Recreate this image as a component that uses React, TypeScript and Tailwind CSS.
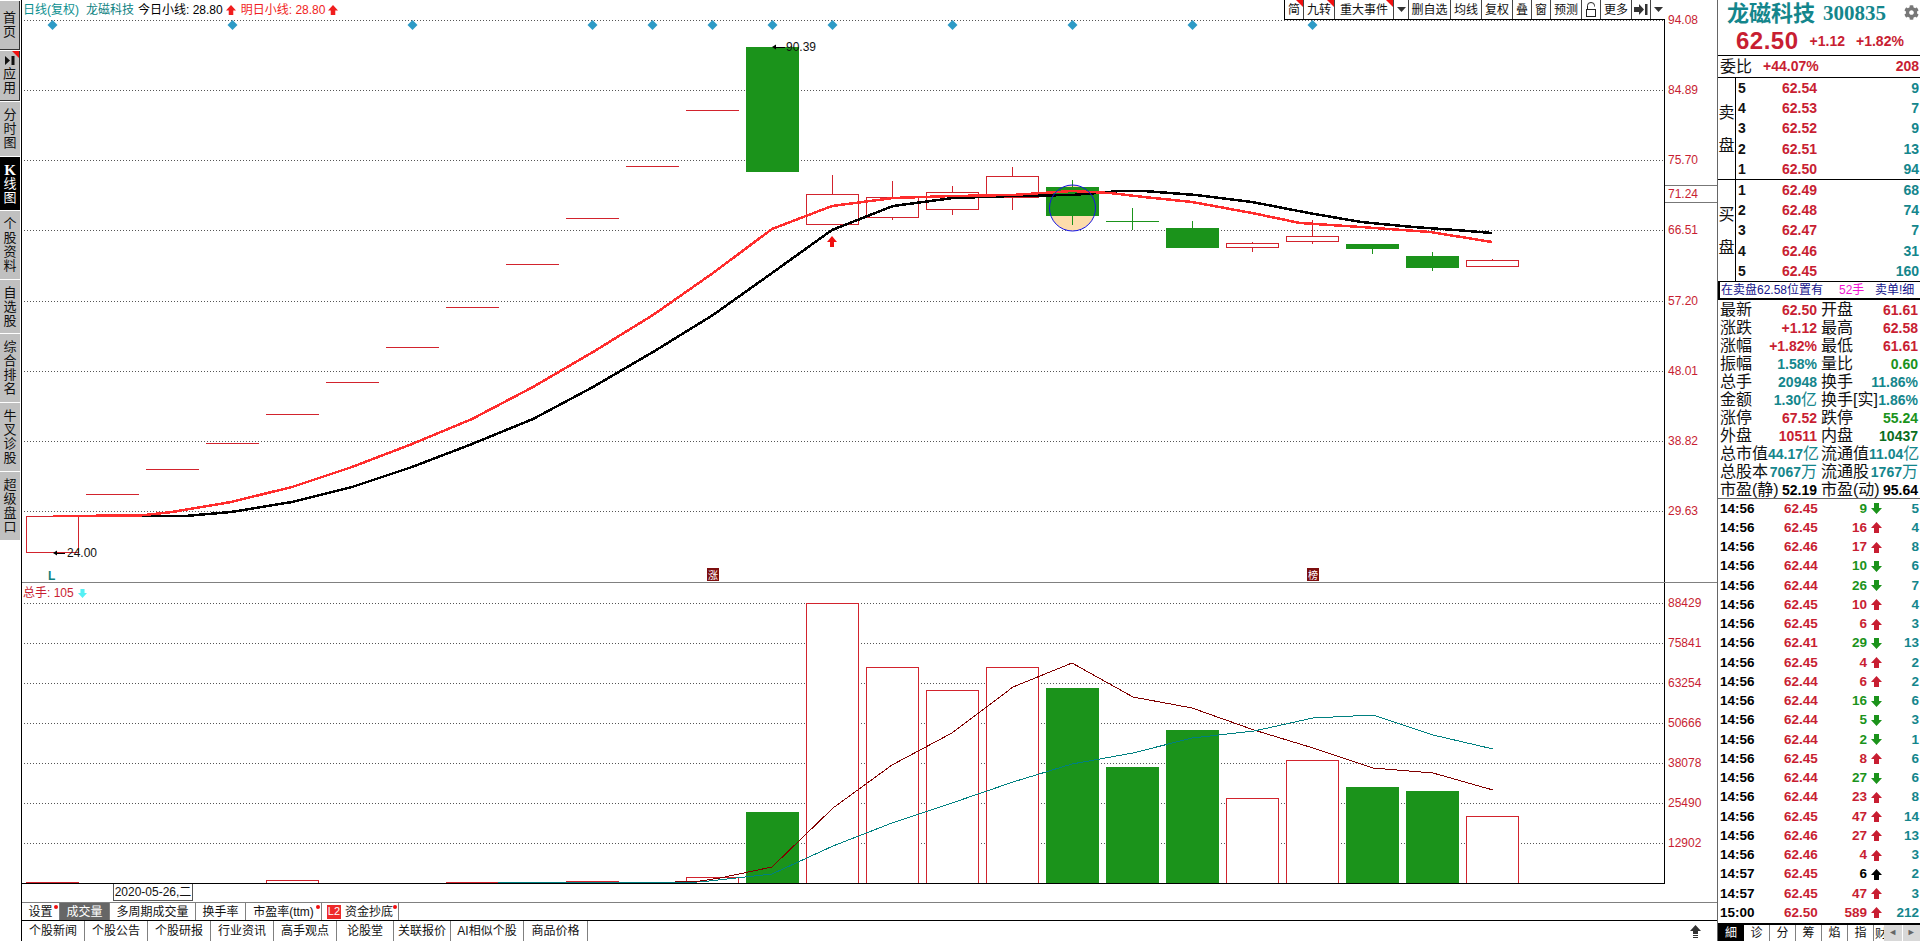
import React from 'react';
import { FaCog } from 'react-icons/fa';

const RED = '#c81e32';
const TEAL = '#14868c';
const GREEN = '#1b931b';

// chart geometry, all in page pixels
const AXIS_X = 1664.5;
const candleLeft = (k: number) => 26 + 60 * k;
const candleMid = (k: number) => 52.5 + 60 * k;

interface Candle {
  k: number;
  top: number;
  bottom: number;
  hi?: number;
  lo?: number;
  up: boolean;
}

const CANDLES: Candle[] = [
  { k: 0, top: 516, bottom: 552, up: true },
  { k: 12, top: 47, bottom: 172, up: false },
  { k: 13, top: 194, bottom: 224, hi: 175, up: true },
  { k: 14, top: 197, bottom: 217, hi: 181, lo: 220, up: true },
  { k: 15, top: 192, bottom: 209, hi: 186, lo: 215, up: true },
  { k: 16, top: 176, bottom: 197, hi: 167, lo: 210, up: true },
  { k: 19, top: 228, bottom: 248, hi: 221, up: false },
  { k: 20, top: 243, bottom: 247, hi: 242, lo: 252, up: true },
  { k: 21, top: 236, bottom: 241, hi: 220, lo: 244, up: true },
  { k: 22, top: 244, bottom: 249, lo: 254, up: false },
  { k: 23, top: 256, bottom: 268, hi: 252, lo: 271, up: false },
  { k: 24, top: 260, bottom: 266, hi: 259, up: true },
];

// one-price limit-up days
const FLAT_DAYS = [
  [1, 494], [2, 469], [3, 443], [4, 414], [5, 382], [6, 347],
  [7, 307], [8, 264], [9, 218], [10, 166], [11, 110],
];

const KLINE_RED = '53,516 140,515.5 172,512 231,502 292,487 352,467 412,444 472,419 533,387 593,352 653,315 713,273 772,229 832,206 893,198 953,196 1012,195 1072,191 1110,193 1144,197 1192,202 1252,213 1300,223 1361,227 1430,232 1492,242';
const KLINE_BLACK = '125,516 185,516 231,512 292,502 352,487 412,467 472,444 533,419 593,387 653,352 713,315 772,273 832,230 893,206 953,198 1012,196 1072,195 1097,193 1120,191 1144,191 1196,195 1252,202 1309,213 1361,222 1413,227 1456,230 1492,233';

const K_GRID = [
  [20, '94.08'], [90, '84.89'], [160, '75.70'], [230, '66.51'],
  [301, '57.20'], [371, '48.01'], [441, '38.82'], [511, '29.63'],
] as const;

const VOL_GRID = [
  [603, '88429'], [643, '75841'], [683, '63254'], [723, '50666'],
  [763, '38078'], [803, '25490'], [843, '12902'],
] as const;

const DIAMONDS = [0, 3, 6, 9, 10, 11, 12, 13, 15, 17, 19, 21];

const VOLUMES: { k: number; top: number; up: boolean }[] = [
  { k: 0, top: 882, up: true }, { k: 1, top: 883, up: true }, { k: 2, top: 883, up: true },
  { k: 3, top: 883, up: true }, { k: 4, top: 880, up: true }, { k: 5, top: 883, up: true },
  { k: 6, top: 883, up: true }, { k: 7, top: 882, up: true }, { k: 8, top: 882, up: true },
  { k: 9, top: 881, up: true }, { k: 10, top: 883, up: true }, { k: 11, top: 877, up: true },
  { k: 12, top: 812, up: false }, { k: 13, top: 603, up: true }, { k: 14, top: 667, up: true },
  { k: 15, top: 690, up: true }, { k: 16, top: 667, up: true }, { k: 17, top: 688, up: false },
  { k: 18, top: 767, up: false }, { k: 19, top: 730, up: false }, { k: 20, top: 798, up: true },
  { k: 21, top: 760, up: true }, { k: 22, top: 787, up: false }, { k: 23, top: 791, up: false },
  { k: 24, top: 816, up: true },
];

const VOL_MA_RED = '400,883 650,883 700,881 720,878 772,867 833,808 892,765 952,733 1013,687 1072,663 1133,697 1192,708 1254,730 1313,748 1373,768 1433,773 1493,790';
const VOL_MA_TEAL = '400,883.5 700,882 772,874 833,846 892,823 952,803 1013,782 1072,764 1133,753 1192,738 1254,731 1313,718 1373,715 1433,735 1493,749';

// left nav strip
const NAV = [
  { chars: ['首', '页'], h: 'h-[49px]', dark: true },
  { chars: ['应', '用'], h: 'h-[50px]', dark: true, flag: true },
  { chars: ['分', '时', '图'], h: 'h-[54px]' },
  { chars: ['线', '图'], h: 'h-[53px]', active: true },
  { chars: ['个', '股', '资', '料'], h: 'h-[68px]' },
  { chars: ['自', '选', '股'], h: 'h-[53px]' },
  { chars: ['综', '合', '排', '名'], h: 'h-[68px]' },
  { chars: ['牛', '叉', '诊', '股'], h: 'h-[68px]' },
  { chars: ['超', '级', '盘', '口'], h: 'h-[68px]' },
];

const TOOLBAR = [
  { label: '简', w: 'w-[19px]', flag: true },
  { label: '九转', w: 'w-[31px]', flag: true },
  { label: '重大事件', w: 'w-[59px]', flag: true },
  { label: 'caret', w: 'w-[15px]' },
  { label: '删自选', w: 'w-[42px]' },
  { label: '均线', w: 'w-[31px]' },
  { label: '复权', w: 'w-[31px]' },
  { label: '叠', w: 'w-[19px]' },
  { label: '窗', w: 'w-[19px]' },
  { label: '预测', w: 'w-[31px]' },
  { label: 'lock', w: 'w-[19px]' },
  { label: '更多', w: 'w-[31px]' },
  { label: 'end', w: 'w-[19px]' },
  { label: 'caret', w: 'w-[14px]' },
];

const SELL = [
  ['5', '62.54', '9'], ['4', '62.53', '7'], ['3', '62.52', '9'], ['2', '62.51', '13'], ['1', '62.50', '94'],
];
const BUY = [
  ['1', '62.49', '68'], ['2', '62.48', '74'], ['3', '62.47', '7'], ['4', '62.46', '31'], ['5', '62.45', '160'],
];

const DARK_GREEN = '#0a6e1e';
const BLACK = '#000';

type Val = { v: string; c: string; unit?: string };
const STATS: [string, Val, string, Val][] = [
  ['最新', { v: '62.50', c: RED }, '开盘', { v: '61.61', c: RED }],
  ['涨跌', { v: '+1.12', c: RED }, '最高', { v: '62.58', c: RED }],
  ['涨幅', { v: '+1.82%', c: RED }, '最低', { v: '61.61', c: RED }],
  ['振幅', { v: '1.58%', c: TEAL }, '量比', { v: '0.60', c: GREEN }],
  ['总手', { v: '20948', c: TEAL }, '换手', { v: '11.86%', c: TEAL }],
  ['金额', { v: '1.30', c: TEAL, unit: '亿' }, '换手[实]', { v: '1.86%', c: TEAL }],
  ['涨停', { v: '67.52', c: RED }, '跌停', { v: '55.24', c: GREEN }],
  ['外盘', { v: '10511', c: RED }, '内盘', { v: '10437', c: DARK_GREEN }],
  ['总市值', { v: '44.17', c: TEAL, unit: '亿' }, '流通值', { v: '11.04', c: TEAL, unit: '亿' }],
  ['总股本', { v: '7067', c: TEAL, unit: '万' }, '流通股', { v: '1767', c: TEAL, unit: '万' }],
  ['市盈(静)', { v: '52.19', c: BLACK }, '市盈(动)', { v: '95.64', c: BLACK }],
];

// time, price, volume, direction, count
const TICKS: [string, string, string, 'up' | 'down' | 'flat', string][] = [
  ['14:56', '62.45', '9', 'down', '5'],
  ['14:56', '62.45', '16', 'up', '4'],
  ['14:56', '62.46', '17', 'up', '8'],
  ['14:56', '62.44', '10', 'down', '6'],
  ['14:56', '62.44', '26', 'down', '7'],
  ['14:56', '62.45', '10', 'up', '4'],
  ['14:56', '62.45', '6', 'up', '3'],
  ['14:56', '62.41', '29', 'down', '13'],
  ['14:56', '62.45', '4', 'up', '2'],
  ['14:56', '62.44', '6', 'up', '2'],
  ['14:56', '62.44', '16', 'down', '6'],
  ['14:56', '62.44', '5', 'down', '3'],
  ['14:56', '62.44', '2', 'down', '1'],
  ['14:56', '62.45', '8', 'up', '6'],
  ['14:56', '62.44', '27', 'down', '6'],
  ['14:56', '62.44', '23', 'up', '8'],
  ['14:56', '62.45', '47', 'up', '14'],
  ['14:56', '62.46', '27', 'up', '13'],
  ['14:56', '62.46', '4', 'up', '3'],
  ['14:57', '62.45', '6', 'flat', '2'],
  ['14:57', '62.45', '47', 'up', '3'],
  ['15:00', '62.50', '589', 'up', '212'],
];

const SUB_TABS = [
  { label: '设置', w: 'w-[38px]', dot: true },
  { label: '成交量', w: 'w-[50px]', active: true },
  { label: '多周期成交量', w: 'w-[86px]' },
  { label: '换手率', w: 'w-[50px]' },
  { label: '市盈率(ttm)', w: 'w-[76px]', dot: true },
  { label: '资金抄底', w: 'w-[77px]', dot: true, l2: true },
];

const NEWS_TABS = [
  { label: '个股新闻', w: 'w-[63px]' },
  { label: '个股公告', w: 'w-[63px]' },
  { label: '个股研报', w: 'w-[63px]' },
  { label: '行业资讯', w: 'w-[63px]' },
  { label: '高手观点', w: 'w-[63px]' },
  { label: '论股堂', w: 'w-[57px]' },
  { label: '关联报价', w: 'w-[57px]' },
  { label: 'AI相似个股', w: 'w-[73px]' },
  { label: '商品价格', w: 'w-[64px]' },
];

const BlockArrow: React.FC<{ dir: 'up' | 'down'; color: string; size?: number }> = ({ dir, color, size = 11 }) => (
  <svg width={size} height={size} viewBox="0 0 11 11" className="block shrink-0">
    <polygon
      points={dir === 'up' ? '5.5,0 11,6 8,6 8,11 3,11 3,6 0,6' : '5.5,11 11,5 8,5 8,0 3,0 3,5 0,5'}
      fill={color}
    />
  </svg>
);

const Caret = () => (
  <svg width="9" height="5" viewBox="0 0 9 5" className="block">
    <polygon points="0,0 9,0 4.5,5" fill="#333" />
  </svg>
);

const CornerFlag = () => (
  <span className="absolute top-0 right-0 w-[7px] h-[7px] bg-[#f01010] [clip-path:polygon(0_0,100%_0,100%_100%)]" />
);

const Sidebar = () => (
  <div className="w-[21px] shrink-0 flex flex-col gap-px pt-px items-start">
    {NAV.map((item, i) => (
      <div
        key={i}
        className={`relative w-[20px] ${item.h} flex flex-col items-center justify-center text-[13px] leading-[14px] ${
          item.active ? 'bg-black text-white' : 'bg-[#c0c0c0] text-[#111]'
        } ${item.dark ? 'border-r border-b border-[#333]' : ''}`}
      >
        {item.flag && <CornerFlag />}
        {item.flag && (
          <svg width="10" height="9" viewBox="0 0 10 9" className="block mb-[2px]">
            <polygon points="0,0 5,4.5 0,9" fill="#111" />
            <rect x="6.5" y="0" width="3" height="9" fill="#111" />
          </svg>
        )}
        {item.active && <span className="font-bold font-['Liberation_Serif',serif] text-[15px]">K</span>}
        {item.chars.map((c) => (
          <span key={c}>{c}</span>
        ))}
      </div>
    ))}
  </div>
);

const Toolbar = () => (
  <div className="absolute top-0 right-[52px] flex h-[20px] bg-white border-b border-black border-l text-[12px] text-[#111]">
    {TOOLBAR.map((t, i) => (
      <div
        key={i}
        className={`relative ${t.w} flex items-center justify-center border-r border-[#444] whitespace-nowrap last:border-r-0`}
      >
        {t.flag && <CornerFlag />}
        {t.label === 'caret' && <Caret />}
        {t.label === 'lock' && (
          <svg width="12" height="15" viewBox="0 0 12 15" className="block">
            <rect x="1.5" y="7.5" width="9" height="7" fill="none" stroke="#222" />
            <path d="M2.5 7 V3.5 Q2.5 .5 6 .5 Q9.5 .5 9.5 3.5 V4.5" fill="none" stroke="#222" />
          </svg>
        )}
        {t.label === 'end' && (
          <svg width="14" height="11" viewBox="0 0 14 11" className="block">
            <polygon points="0,3 5,3 5,0 10,5.5 5,11 5,8 0,8" fill="#333" />
            <rect x="11" y="0" width="2.5" height="11" fill="#333" />
          </svg>
        )}
        {!['caret', 'lock', 'end'].includes(t.label) && t.label}
      </div>
    ))}
  </div>
);

const KLinePanel = () => (
  <div className="relative h-[582px] shrink-0">
    <svg viewBox="22 0 1695 582" className="block w-full h-full">
      {K_GRID.map(([y, label]) => (
        <g key={y}>
          <line x1="24" x2={AXIS_X} y1={y + 0.5} y2={y + 0.5} stroke="#555" strokeDasharray="1 2" shapeRendering="crispEdges" />
          <text x="1668" y={y + 4} fontSize="12" fill={RED}>{label}</text>
        </g>
      ))}
      <line x1={AXIS_X} x2={AXIS_X} y1="0" y2="582" stroke="#000" shapeRendering="crispEdges" />

      {/* current price box on the axis */}
      <line x1={AXIS_X} x2="1717" y1="185.5" y2="185.5" stroke="#777" shapeRendering="crispEdges" />
      <line x1={AXIS_X} x2="1717" y1="202.5" y2="202.5" stroke="#777" shapeRendering="crispEdges" />
      <text x="1668" y="198" fontSize="12" fill={RED}>71.24</text>

      {DIAMONDS.map((k) => {
        const x = candleMid(k);
        return <polygon key={k} points={`${x},20 ${x + 5},25 ${x},30 ${x - 5},25`} fill="#2e9bc6" />;
      })}

      {FLAT_DAYS.map(([k, y]) => (
        <line key={k} x1={candleLeft(k)} x2={candleLeft(k) + 53} y1={y + 0.5} y2={y + 0.5} stroke="#d2232d" shapeRendering="crispEdges" />
      ))}

      {/* highlighted day: the disc sits behind the candle body */}
      <circle cx="1072.5" cy="208" r="23" fill="#fddcab" />
      <line x1="1072.5" x2="1072.5" y1="180" y2="225" stroke={GREEN} shapeRendering="crispEdges" />
      <rect x="1046" y="187" width="53" height="29" fill={GREEN} shapeRendering="crispEdges" />
      <line x1="1072.5" x2="1072.5" y1="216" y2="225" stroke={GREEN} shapeRendering="crispEdges" />

      {/* doji */}
      <line x1="1106" x2="1159" y1="221.5" y2="221.5" stroke={GREEN} shapeRendering="crispEdges" />
      <line x1="1132.5" x2="1132.5" y1="208" y2="230" stroke={GREEN} shapeRendering="crispEdges" />

      {CANDLES.map((c) => {
        const x = candleLeft(c.k);
        const mid = candleMid(c.k);
        const color = c.up ? '#d2232d' : GREEN;
        return (
          <g key={c.k} shapeRendering="crispEdges">
            {c.hi !== undefined && <line x1={mid} x2={mid} y1={c.hi} y2={c.top} stroke={color} />}
            {c.lo !== undefined && <line x1={mid} x2={mid} y1={c.bottom} y2={c.lo} stroke={color} />}
            {c.up ? (
              <rect x={x + 0.5} y={c.top + 0.5} width="52" height={c.bottom - c.top} fill="none" stroke={color} />
            ) : (
              <rect x={x} y={c.top} width="53" height={c.bottom - c.top} fill={color} />
            )}
          </g>
        );
      })}

      <polyline points={KLINE_BLACK} fill="none" stroke="#000" strokeWidth="2.5" shapeRendering="crispEdges" />
      <polyline points={KLINE_RED} fill="none" stroke="#ff2d2d" strokeWidth="2.5" shapeRendering="crispEdges" />
      <circle cx="1072.5" cy="208" r="23" fill="none" stroke="#1414e6" />

      {/* buy arrow under the first open day */}
      <polygon points="832,236 837,242 834,242 834,247 830,247 830,242 827,242" fill="#f01010" />

      {/* high and low marks */}
      <polygon points="772,47 776,44.5 776,49.5" fill="#000" />
      <line x1="775" x2="785" y1="47.5" y2="47.5" stroke="#000" shapeRendering="crispEdges" />
      <text x="786" y="51" fontSize="12" fill="#111">90.39</text>
      <polygon points="53,553 57,550.5 57,555.5" fill="#000" />
      <line x1="56" x2="65" y1="553.5" y2="553.5" stroke="#000" shapeRendering="crispEdges" />
      <text x="67" y="557" fontSize="12" fill="#111">24.00</text>

      <text x="48" y="580" fontSize="12" fontWeight="bold" fill="#0f8080">L</text>
      <rect x="707" y="568" width="12" height="13" fill="#7d0f0f" />
      <text x="713" y="578.5" fontSize="10" fill="#fff" textAnchor="middle">涨</text>
      <rect x="1307" y="568" width="12" height="13" fill="#7d0f0f" />
      <text x="1313" y="578.5" fontSize="10" fill="#fff" textAnchor="middle">榜</text>
    </svg>

    <div className="absolute top-[3px] left-[1px] flex items-center text-[12px] leading-[14px] whitespace-nowrap">
      <span className="text-[#0c9090]">日线(复权)</span>
      <span className="text-[#0c7f7f] ml-[7px]">龙磁科技</span>
      <span className="text-black ml-[4px]">今日小线: 28.80</span>
      <span className="ml-[3px]"><BlockArrow dir="up" color="#f01e1e" size={10} /></span>
      <span className="text-[#f01e1e] ml-[5px]">明日小线: 28.80</span>
      <span className="ml-[3px]"><BlockArrow dir="up" color="#f01e1e" size={10} /></span>
    </div>

    <Toolbar />
  </div>
);

const VolumePanel = () => (
  <div className="relative h-[302px] shrink-0 border-t border-[#808080]">
    <svg viewBox="22 583 1695 301" className="block w-full h-full">
      {VOL_GRID.map(([y, label]) => (
        <g key={y}>
          <line x1="24" x2={AXIS_X} y1={y + 0.5} y2={y + 0.5} stroke="#555" strokeDasharray="1 2" shapeRendering="crispEdges" />
          <text x="1668" y={y + 4} fontSize="12" fill={RED}>{label}</text>
        </g>
      ))}
      <line x1={AXIS_X} x2={AXIS_X} y1="583" y2="884" stroke="#000" shapeRendering="crispEdges" />

      {VOLUMES.map((b) => (
        <rect
          key={b.k}
          x={b.up ? candleLeft(b.k) + 0.5 : candleLeft(b.k)}
          y={b.up ? b.top + 0.5 : b.top}
          width={b.up ? 52 : 53}
          height={884 - b.top}
          fill={b.up ? '#fff' : GREEN}
          stroke={b.up ? '#d2232d' : 'none'}
          shapeRendering="crispEdges"
        />
      ))}

      <polyline points={VOL_MA_RED} fill="none" stroke="#800000" shapeRendering="crispEdges" />
      <polyline points={VOL_MA_TEAL} fill="none" stroke="#008080" shapeRendering="crispEdges" />
      <line x1="22" x2={AXIS_X} y1="883.5" y2="883.5" stroke="#000" shapeRendering="crispEdges" />
    </svg>

    <div className="absolute top-[3px] left-[1px] flex items-center text-[12px] leading-[14px] text-[#c81e32] whitespace-nowrap">
      总手: 105
      <span className="ml-[4px]"><BlockArrow dir="down" color="#55f0f5" size={9} /></span>
    </div>
  </div>
);

const BottomTabs = () => (
  <>
    <div className="h-[18px] shrink-0 text-[12px] text-[#111] whitespace-nowrap">
      <div className="ml-[91px] w-[80px] h-[17px] flex items-center justify-center border-x border-b border-[#555]">
        2020-05-26,二
      </div>
    </div>

    <div className="h-[18px] shrink-0 flex border-t border-[#808080] text-[12px] text-[#111] whitespace-nowrap">
      {SUB_TABS.map((t) => (
        <div
          key={t.label}
          className={`relative ${t.w} flex items-center justify-center border-r border-[#808080] ${
            t.active ? 'bg-[#666] text-white' : ''
          }`}
        >
          {t.l2 && (
            <span className="w-[14px] h-[14px] mr-[4px] bg-[#ee2a2a] text-white text-[11px] flex items-center justify-center">L2</span>
          )}
          {t.label}
          {t.dot && <span className="absolute top-[2px] right-[1px] w-[4px] h-[4px] rounded-full bg-[#f01010]" />}
        </div>
      ))}
    </div>

    <div className="h-[21px] shrink-0 flex items-stretch border-t border-black text-[12px] text-[#111] whitespace-nowrap">
      {NEWS_TABS.map((t) => (
        <div key={t.label} className={`${t.w} flex items-center justify-center border-r border-[#808080]`}>
          {t.label}
        </div>
      ))}
      <div className="flex-1 flex items-center justify-end pr-[15px]">
        <svg width="13" height="13" viewBox="0 0 13 13" className="block">
          <path d="M6.5 0 L12 6 H9 V9 H4 V6 H1 Z M4 10 H9 V11 H4 Z M4 12 H9 V13 H4 Z" fill="#333" />
        </svg>
      </div>
    </div>
  </>
);

const QuoteRows: React.FC<{ rows: string[][]; names: [string, string] }> = ({ rows, names }) => (
  <div className="flex h-[102px] border-b border-black">
    <div className="w-[18px] shrink-0 border-r border-black flex flex-col items-center justify-center text-[16px] leading-[33px] text-[#111]">
      <span>{names[0]}</span>
      <span>{names[1]}</span>
    </div>
    <div className="flex-1 flex flex-col font-bold text-[14px]">
      {rows.map(([level, price, vol]) => (
        <div key={level} className="h-[20.4px] flex items-center">
          <span className="w-[46px] pl-[2px] text-[#111]">{level}</span>
          <span className="w-[36px] text-[#c81e32]">{price}</span>
          <span className="flex-1 text-right pr-[1px] text-[#14868c]">{vol}</span>
        </div>
      ))}
    </div>
  </div>
);

const StatValue: React.FC<{ val: Val }> = ({ val }) => (
  <span className="font-bold text-[14px]" style={{ color: val.c }}>
    {val.v}
    {val.unit && <span className="font-normal text-[16px]">{val.unit}</span>}
  </span>
);

const TickRow: React.FC<{ tick: (typeof TICKS)[number] }> = ({ tick }) => {
  const [time, price, vol, dir, count] = tick;
  const color = dir === 'down' ? GREEN : dir === 'flat' ? BLACK : RED;
  return (
    <div className="h-[19.25px] flex items-center pl-[2px] font-bold text-[13.5px]">
      <span className="w-[64px] text-black">{time}</span>
      <span className="w-[34px] text-[#c81e32]">{price}</span>
      <span className="w-[49px] text-right" style={{ color }}>{vol}</span>
      <span className="ml-[4px]"><BlockArrow dir={dir === 'down' ? 'down' : 'up'} color={color} /></span>
      <span className="flex-1 text-right pr-[1px] text-[#14868c]">{count}</span>
    </div>
  );
};

const RightPanel = () => (
  <div className="w-[203px] shrink-0 border-l border-[#666] flex flex-col">
    <div className="relative h-[27px] flex items-center pl-[9px] text-[#14868c] font-bold whitespace-nowrap">
      <span className="text-[22px] leading-[26px]">龙磁科技</span>
      <span className="ml-[8px] text-[21px] font-['Liberation_Serif',serif]">300835</span>
      <FaCog className="absolute right-[1px] top-[5px] text-[#777]" size={15} />
    </div>

    <div className="h-[29px] flex items-center pl-[18px] text-[#c81e32] font-bold border-b border-black whitespace-nowrap">
      <span className="text-[24px] tracking-[0.5px]">62.50</span>
      <span className="ml-[11px] text-[14px]">+1.12</span>
      <span className="ml-[11px] text-[14px]">+1.82%</span>
    </div>

    <div className="h-[22px] flex items-center pl-[2px] border-b border-black whitespace-nowrap">
      <span className="text-[16px] text-[#111]">委比</span>
      <span className="ml-[11px] text-[14px] font-bold text-[#c81e32]">+44.07%</span>
      <span className="flex-1 text-right pr-[1px] text-[14px] font-bold text-[#c81e32]">208</span>
    </div>

    <QuoteRows rows={SELL} names={['卖', '盘']} />
    <QuoteRows rows={BUY} names={['买', '盘']} />

    <div className="h-[18px] flex items-center border-l-2 border-b-2 border-black pl-[1px] text-[12px] text-[#14148c] whitespace-nowrap overflow-hidden">
      <span className="w-[118px]">在卖盘62.58位置有</span>
      <span className="w-[36px] text-[#f014d2]">52手</span>
      <span>卖单!细</span>
    </div>

    <div className="flex flex-col h-[199px] pt-px border-b border-[#666]">
      {STATS.map(([l1, v1, l2, v2]) => (
        <div key={l1} className="h-[18px] flex items-center pl-[2px] text-[#111] text-[16px] whitespace-nowrap">
          <div className="w-[97px] flex items-center justify-between">
            <span>{l1}</span>
            <StatValue val={v1} />
          </div>
          <div className="w-[97px] ml-[4px] flex items-center justify-between">
            <span>{l2}</span>
            <StatValue val={v2} />
          </div>
        </div>
      ))}
    </div>

    <div className="flex-1 flex flex-col">
      {TICKS.map((t, i) => (
        <TickRow key={i} tick={t} />
      ))}
    </div>

    <div className="h-[18px] shrink-0 flex border-t-2 border-black text-[12px] text-[#111] whitespace-nowrap overflow-hidden">
      <div className="w-[26px] bg-black text-white flex items-center justify-center">細</div>
      {['诊', '分', '筹', '焰', '指'].map((c) => (
        <div key={c} className="w-[26px] flex items-center justify-center border-r border-[#808080]">{c}</div>
      ))}
      <div className="w-[10px] overflow-hidden pl-[1px]">财</div>
      <div className="flex-1 flex bg-[#d8d8d8]">
        <div className="flex-1 flex items-center justify-center border-r border-white text-[#666] text-[9px]">◄</div>
        <div className="flex-1 flex items-center justify-center text-[#666] text-[9px]">►</div>
      </div>
    </div>
  </div>
);

const App: React.FC = () => (
  <div className="w-[1920px] h-[941px] flex overflow-hidden bg-white text-black font-['Liberation_Sans','Noto_Sans_CJK_SC',sans-serif]">
    <Sidebar />
    <div className="flex-1 min-w-0 flex flex-col border-l border-black">
      <KLinePanel />
      <VolumePanel />
      <BottomTabs />
    </div>
    <RightPanel />
  </div>
);

export default App;
